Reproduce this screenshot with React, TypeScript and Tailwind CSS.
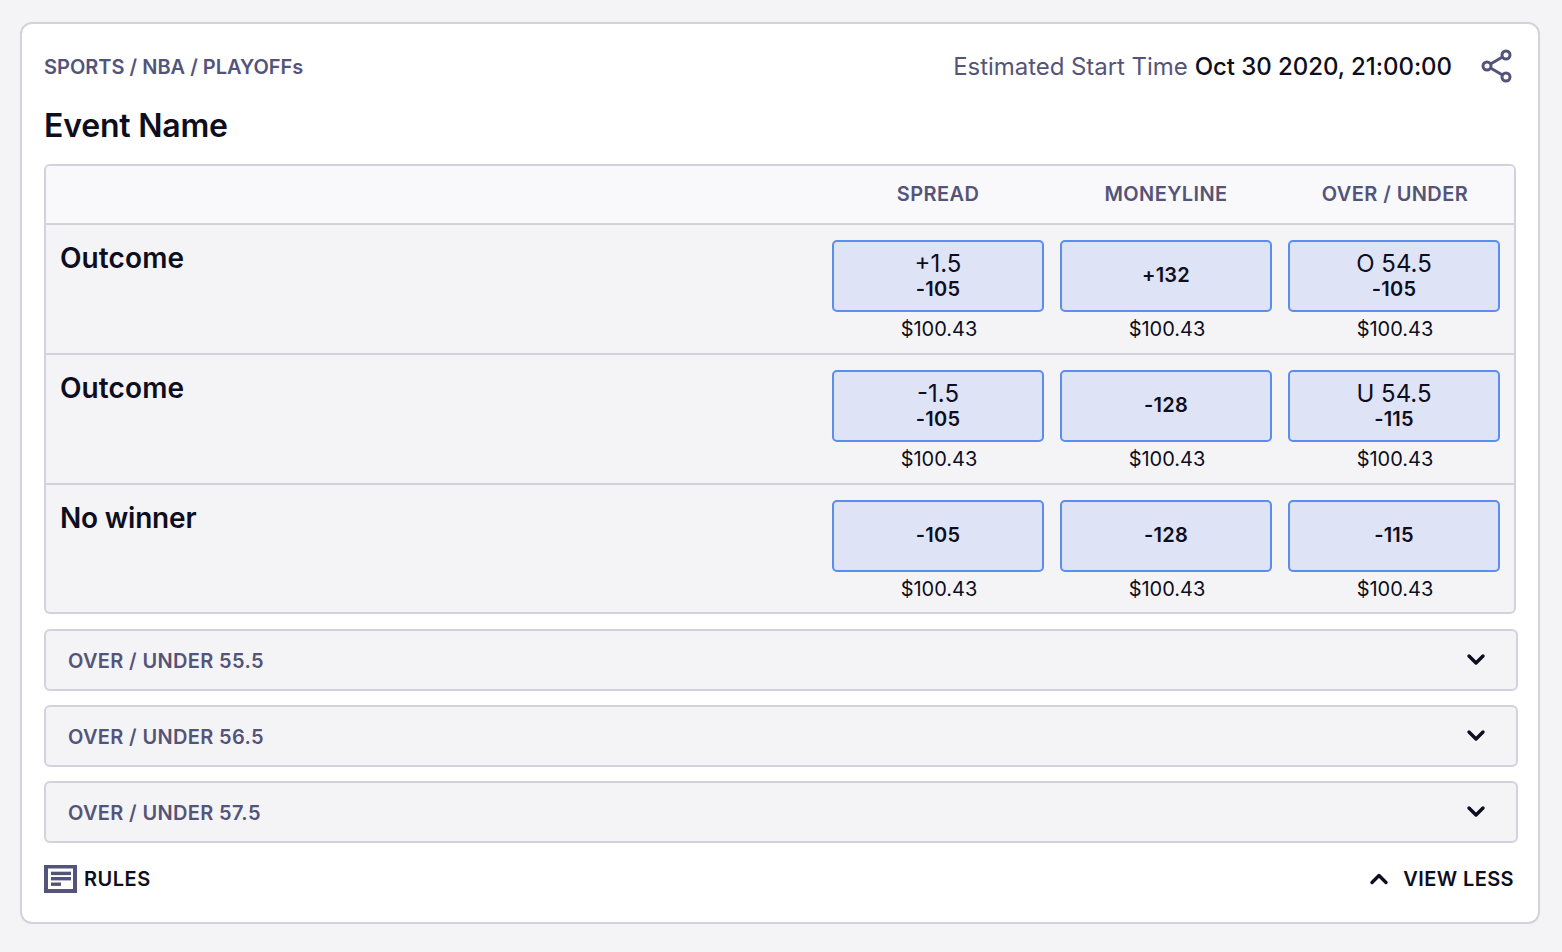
import React from "react";

const FONT = "font-['Inter',sans-serif]";

function Odds({ top, bottom }: { top?: string; bottom: string }) {
  return (
    <div className="flex w-[212px] flex-col items-center">
      <div className="flex h-[72px] w-[212px] flex-col items-center justify-center rounded-[5px] border-2 border-[#5b8def] bg-[#dee4f6] text-[#0e0e20]">
        {top ? (
          <>
            <div className="text-[24px] leading-[26px]">{top}</div>
            <div className="mt-[1px] text-[20px] font-semibold leading-[23px] tracking-[0.2px]">{bottom}</div>
          </>
        ) : (
          <div className="mb-[2px] text-[20px] font-semibold leading-[24px] tracking-[0.2px]">{bottom}</div>
        )}
      </div>
      <div className="mt-[5px] pl-[2px] text-[20px] leading-[24px] text-[#0e0e20]">$100.43</div>
    </div>
  );
}

function Row({ name, cells, last }: { name: string; cells: { top?: string; bottom: string }[]; last?: boolean }) {
  return (
    <div className={`flex h-[130px] justify-between px-[14px] pt-[15px] ${last ? "" : "border-b-2 border-[#d2d2dc]"}`}>
      <div className={`pt-[1px] text-[28px] font-semibold leading-[34px] text-[#0e0e20] ${last ? "tracking-[-0.2px]" : "tracking-[0.1px]"}`}>{name}</div>
      <div className="flex gap-4">
        {cells.map((c, i) => (
          <Odds key={i} top={c.top} bottom={c.bottom} />
        ))}
      </div>
    </div>
  );
}

function Accordion({ label }: { label: string }) {
  return (
    <div className="flex h-[62px] w-[1474px] items-center justify-between rounded-[6px] border-2 border-[#d2d2dc] bg-[#f4f4f7] pl-[22px] pr-[30px]">
      <span className="pt-[2px] text-[20px] font-semibold leading-[24px] tracking-[0.35px] text-[#54547a]">{label}</span>
      <svg width="20" height="14" viewBox="0 0 20 14" fill="none" className="mb-[3px]">
        <path d="M3 4l7 7 7-7" stroke="#0e0e20" strokeWidth="3.4" strokeLinecap="round" strokeLinejoin="round" />
      </svg>
    </div>
  );
}

export default function App() {
  return (
    <div className={`${FONT} min-h-[952px] bg-[#f4f4f7] px-5 pt-[22px]`}>
      <div className="h-[902px] w-[1520px] rounded-[12px] border-2 border-[#d2d2dc] bg-white pl-[22px] pt-[22px]">
        <div className="flex h-[42px] w-[1472px] items-center justify-between">
          <div className="text-[20px] font-semibold leading-[24px] text-[#54547a]">SPORTS / NBA / PLAYOFFs</div>
          <div className="flex items-center">
            <span className="text-[24px] leading-[30px] tracking-[-0.05px] text-[#54547a]">Estimated Start Time</span>
            <span className="ml-[7px] text-[24px] font-medium leading-[30px] tracking-[-0.05px] text-[#0e0e20]">Oct 30 2020, 21:00:00</span>
            <svg width="34" height="36" viewBox="0 0 34 36" fill="none" className="mb-[2px] ml-[27px] mr-[3px]" stroke="#54547a" strokeWidth="3">
              <circle cx="27" cy="7" r="4" />
              <circle cx="8" cy="18" r="4" />
              <circle cx="27" cy="29" r="4" />
              <path d="M11.5 16 23.5 9M11.5 20 23.5 27" />
            </svg>
          </div>
        </div>
        <div className="mt-[18px] text-[32px] font-semibold leading-[40px] tracking-[-0.2px] text-[#0e0e20]">Event Name</div>
        <div className="mt-[18px] h-[450px] w-[1472px] rounded-[6px] border-2 border-[#d2d2dc] bg-[#f4f4f7]">
          <div className="flex h-[59px] justify-end gap-4 rounded-t-[4px] border-b-2 border-[#d2d2dc] bg-[#f9f9fb] pr-[14px]">
            {["SPREAD", "MONEYLINE", "OVER / UNDER"].map((h, i) => (
              <div key={h} className={`flex w-[212px] items-center justify-center pb-[1px] text-[20px] font-semibold leading-[24px] tracking-[0.4px] text-[#54547a] ${i === 2 ? "pl-[2px]" : ""}`}>
                {h}
              </div>
            ))}
          </div>
          <Row name="Outcome" cells={[{ top: "+1.5", bottom: "-105" }, { bottom: "+132" }, { top: "O 54.5", bottom: "-105" }]} />
          <Row name="Outcome" cells={[{ top: "-1.5", bottom: "-105" }, { bottom: "-128" }, { top: "U 54.5", bottom: "-115" }]} />
          <Row name="No winner" last cells={[{ bottom: "-105" }, { bottom: "-128" }, { bottom: "-115" }]} />
        </div>
        <div className="mt-[15px] flex flex-col gap-[14px]">
          <Accordion label="OVER / UNDER 55.5" />
          <Accordion label="OVER / UNDER 56.5" />
          <Accordion label="OVER / UNDER 57.5" />
        </div>
        <div className="mt-[21px] flex h-[30px] w-[1470px] items-center justify-between">
          <div className="flex items-center">
            <svg width="33" height="28" viewBox="0 0 33 28" fill="none">
              <rect x="0" y="0" width="33" height="28" fill="#54547a" />
              <rect x="4" y="3.5" width="25" height="20.5" fill="#fff" />
              <rect x="7" y="6.7" width="20" height="3.4" fill="#54547a" />
              <rect x="7" y="12" width="20" height="3.4" fill="#54547a" />
              <rect x="7" y="17.5" width="10" height="3.4" fill="#54547a" />
            </svg>
            <span className="ml-[7px] text-[20px] font-semibold leading-[24px] tracking-[0.5px] text-[#0e0e20]">RULES</span>
          </div>
          <div className="flex items-center">
            <svg width="20" height="14" viewBox="0 0 20 14" fill="none">
              <path d="M3 10.5l7-7 7 7" stroke="#0e0e20" strokeWidth="3.4" strokeLinecap="round" strokeLinejoin="round" />
            </svg>
            <span className="ml-[14px] text-[20px] font-semibold leading-[24px] tracking-[0.4px] text-[#0e0e20]">VIEW LESS</span>
          </div>
        </div>
      </div>
    </div>
  );
}
